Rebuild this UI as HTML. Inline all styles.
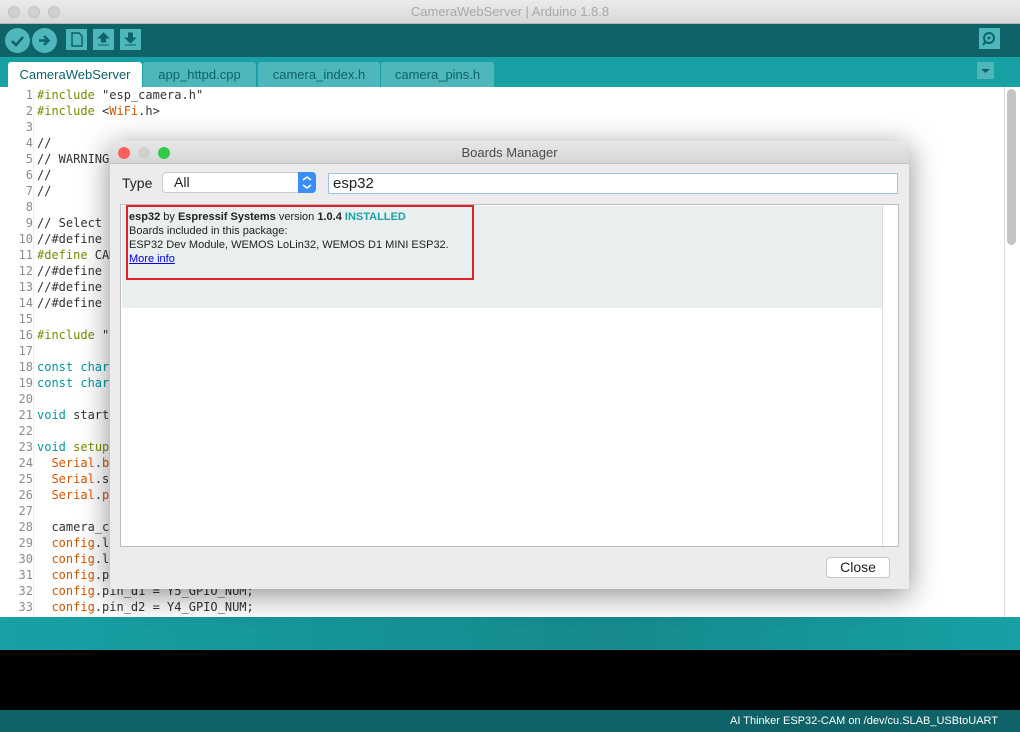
<!DOCTYPE html>
<html><head><meta charset="utf-8"><style>
*{margin:0;padding:0;box-sizing:border-box}
body{width:1020px;height:732px;overflow:hidden;background:#fff;font-family:"Liberation Sans",sans-serif;position:relative}
.abs{position:absolute}
#title{left:0;top:0;width:1020px;height:24px;background:linear-gradient(#ebebeb,#d8d8d8);border-bottom:1px solid #b9b9b9;text-align:center;font-size:13px;color:#a8a8a8;line-height:24px}
.dot{width:12px;height:12px;border-radius:50%;background:#d0d0d0;border:1px solid #c2c2c2;top:6px}
#tb{left:0;top:24px;width:1020px;height:33px;background:#0f6267}
.rb{width:25px;height:25px;border-radius:50%;background:#4db7bb;top:28px}
.sb{width:21px;height:21px;background:#4db7bb;top:29px}
#tabs{left:0;top:57px;width:1020px;height:30px;background:#17a1a5}
.tab{top:62px;height:25px;background:#4db7bb;color:#0f6267;font-size:13px;line-height:25px;text-align:center;border-radius:3px 3px 0 0}
#ed{left:0;top:87px;width:1005px;height:530px;background:#fff;font-family:"DejaVu Sans Mono","Liberation Mono",monospace;font-size:12px}
.ln{position:absolute;left:0;width:33px;text-align:right;color:#8c8c8c;height:16px;line-height:16px}
.cd{position:absolute;left:37px;color:#333;height:16px;line-height:16px;white-space:pre}
.g{color:#728e00}.t{color:#00979c}.o{color:#d35400}
#dlg{left:110px;top:141px;width:799px;height:448px;background:#ececec;box-shadow:0 6px 30px rgba(0,0,0,.45);border-radius:5px 5px 0 0}
</style></head><body>
<div id="title" class="abs">CameraWebServer | Arduino 1.8.8</div>
<div class="abs dot" style="left:8px"></div><div class="abs dot" style="left:28px"></div><div class="abs dot" style="left:48px"></div>
<div id="tb" class="abs"></div>
<div class="abs rb" style="left:5px"><svg width="25" height="25"><path d="M7 13l4 4 7-8" stroke="#0f6267" stroke-width="2.5" fill="none"/></svg></div>
<div class="abs rb" style="left:32px"><svg width="25" height="25"><path d="M7 12.5h9M12 8l4.5 4.5L12 17" stroke="#0f6267" stroke-width="2.5" fill="none"/></svg></div>
<div class="abs sb" style="left:66px"><svg width="21" height="21"><path d="M6 4h7l3 3v10H6z" fill="none" stroke="#0f6267" stroke-width="1.5"/></svg></div>
<div class="abs sb" style="left:93px"><svg width="21" height="21"><path d="M10.5 4l-5 5h3v4h4V9h3z M5 16h11" fill="#0f6267" stroke="#0f6267"/></svg></div>
<div class="abs sb" style="left:120px"><svg width="21" height="21"><path d="M10.5 14l-5-5h3V4h4v5h3z M5 16h11" fill="#0f6267" stroke="#0f6267"/></svg></div>
<div class="abs sb" style="left:979px;top:28px"><svg width="21" height="21"><circle cx="10" cy="10" r="5" fill="none" stroke="#0f6267" stroke-width="2"/><circle cx="10" cy="10" r="1.5" fill="#0f6267"/><path d="M7 13l-3 4" stroke="#0f6267" stroke-width="2"/></svg></div>
<div id="tabs" class="abs"></div>
<div class="abs tab" style="left:8px;width:134px;background:#fff;color:#0f6267">CameraWebServer</div>
<div class="abs tab" style="left:143px;width:113px">app_httpd.cpp</div>
<div class="abs tab" style="left:258px;width:122px">camera_index.h</div>
<div class="abs tab" style="left:381px;width:113px">camera_pins.h</div>
<div class="abs" style="left:977px;top:62px;width:17px;height:17px;background:#4db7bb"><svg width="17" height="17"><path d="M4 7h9l-4.5 4z" fill="#0f6267"/></svg></div>
<div id="ed" class="abs">
<div style="position:absolute;left:33px;top:0;width:1px;height:530px;background:#eee"></div>
<div class="ln" style="top:0">1</div><div class="cd" style="top:0"><span class="g">#include</span> "esp_camera.h"</div>
<div class="ln" style="top:16px">2</div><div class="cd" style="top:16px"><span class="g">#include</span> &lt;<span class="o">WiFi</span>.h&gt;</div>
<div class="ln" style="top:32px">3</div>
<div class="ln" style="top:48px">4</div><div class="cd" style="top:48px">//</div>
<div class="ln" style="top:64px">5</div><div class="cd" style="top:64px">// WARNING!!</div>
<div class="ln" style="top:80px">6</div><div class="cd" style="top:80px">//</div>
<div class="ln" style="top:96px">7</div><div class="cd" style="top:96px">//</div>
<div class="ln" style="top:112px">8</div>
<div class="ln" style="top:128px">9</div><div class="cd" style="top:128px">// Select camera</div>
<div class="ln" style="top:144px">10</div><div class="cd" style="top:144px">//#define CAMERA</div>
<div class="ln" style="top:160px">11</div><div class="cd" style="top:160px"><span class="g">#define</span> CAMERA</div>
<div class="ln" style="top:176px">12</div><div class="cd" style="top:176px">//#define CAMERA</div>
<div class="ln" style="top:192px">13</div><div class="cd" style="top:192px">//#define CAMERA</div>
<div class="ln" style="top:208px">14</div><div class="cd" style="top:208px">//#define CAMERA</div>
<div class="ln" style="top:224px">15</div>
<div class="ln" style="top:240px">16</div><div class="cd" style="top:240px"><span class="g">#include</span> "camera</div>
<div class="ln" style="top:256px">17</div>
<div class="ln" style="top:272px">18</div><div class="cd" style="top:272px"><span class="t">const char</span>* ssid</div>
<div class="ln" style="top:288px">19</div><div class="cd" style="top:288px"><span class="t">const char</span>* pass</div>
<div class="ln" style="top:304px">20</div>
<div class="ln" style="top:320px">21</div><div class="cd" style="top:320px"><span class="t">void</span> startCamera</div>
<div class="ln" style="top:336px">22</div>
<div class="ln" style="top:352px">23</div><div class="cd" style="top:352px"><span class="t">void</span> <span class="g">setup</span>() {</div>
<div class="ln" style="top:368px">24</div><div class="cd" style="top:368px">  <span class="o">Serial</span>.<span class="o">begin</span></div>
<div class="ln" style="top:384px">25</div><div class="cd" style="top:384px">  <span class="o">Serial</span>.setDe</div>
<div class="ln" style="top:400px">26</div><div class="cd" style="top:400px">  <span class="o">Serial</span>.<span class="o">print</span></div>
<div class="ln" style="top:416px">27</div>
<div class="ln" style="top:432px">28</div><div class="cd" style="top:432px">  camera_config</div>
<div class="ln" style="top:448px">29</div><div class="cd" style="top:448px">  <span class="o">config</span>.ledc</div>
<div class="ln" style="top:464px">30</div><div class="cd" style="top:464px">  <span class="o">config</span>.ledc</div>
<div class="ln" style="top:480px">31</div><div class="cd" style="top:480px">  <span class="o">config</span>.pin_</div>
<div class="ln" style="top:496px">32</div><div class="cd" style="top:496px">  <span class="o">config</span>.pin_d1 = Y5_GPIO_NUM;</div>
<div class="ln" style="top:512px">33</div><div class="cd" style="top:512px">  <span class="o">config</span>.pin_d2 = Y4_GPIO_NUM;</div>
</div>
<div class="abs" style="left:1007px;top:89px;width:9px;height:156px;background:#c4c4c4;border-radius:5px"></div>
<div class="abs" style="left:1004px;top:87px;width:1px;height:530px;background:#ddd"></div>
<div class="abs" style="left:0;top:617px;width:1020px;height:33px;background:linear-gradient(90deg,#17a1a5,#168a8e 60%,#17a1a5)"></div>
<div class="abs" style="left:0;top:650px;width:1020px;height:60px;background:#000"></div>
<div class="abs" style="left:0;top:710px;width:1020px;height:22px;background:#0f6267;color:#fff;font-size:11px;line-height:22px;text-align:right;padding-right:22px">AI Thinker ESP32-CAM on /dev/cu.SLAB_USBtoUART</div>

<div id="dlg" class="abs">
<div class="abs" style="left:0;top:0;width:799px;height:23px;background:linear-gradient(#e8e8e8,#d6d6d6);border-bottom:1px solid #c0c0c0;border-radius:5px 5px 0 0;text-align:center;font-size:13px;line-height:23px;color:#4a4a4a">Boards Manager</div>
<div class="abs" style="left:8px;top:6px;width:12px;height:12px;border-radius:50%;background:#fc605c"></div>
<div class="abs" style="left:28px;top:6px;width:12px;height:12px;border-radius:50%;background:#d0d0d0"></div>
<div class="abs" style="left:48px;top:6px;width:12px;height:12px;border-radius:50%;background:#34c84a"></div>
<div class="abs" style="left:12px;top:34px;font-size:14px;color:#222">Type</div>
<div class="abs" style="left:52px;top:31px;width:154px;height:21px;background:#fff;border:1px solid #ccc;border-radius:4px;font-size:14px;line-height:19px;padding-left:11px;color:#222">All</div>
<div class="abs" style="left:188px;top:31px;width:18px;height:21px;background:#3b8ef5;border-radius:0 4px 4px 0"><svg width="18" height="21"><path d="M5 8l4-3 4 3M5 13l4 3 4-3" stroke="#fff" stroke-width="1.5" fill="none"/></svg></div>
<div class="abs" style="left:218px;top:32px;width:570px;height:21px;background:#fff;border:1px solid #9cc3ea;font-size:15px;line-height:19px;padding-left:4px;color:#222">esp32</div>
<div class="abs" style="left:10px;top:63px;width:779px;height:343px;background:#fff;border:1px solid #bdbdbd"></div>
<div class="abs" style="left:12px;top:65px;width:760px;height:102px;background:#e9eeee"></div>
<div class="abs" style="left:772px;top:65px;width:1px;height:340px;background:#ddd"></div>
<div class="abs" style="left:16px;top:64px;width:348px;height:75px;border:2px solid #e2202a"></div>
<div class="abs" style="left:19px;top:69px;font-size:11px;line-height:14px;color:#222"><b>esp32</b> by <b>Espressif Systems</b> version <b>1.0.4</b> <b style="color:#1aa3a7">INSTALLED</b><br>Boards included in this package:<br>ESP32 Dev Module, WEMOS LoLin32, WEMOS D1 MINI ESP32.<br><span style="color:#00e;text-decoration:underline">More info</span></div>
<div class="abs" style="left:716px;top:416px;width:64px;height:21px;background:#fff;border:1px solid #c8c8c8;border-radius:4px;font-size:14px;line-height:19px;text-align:center;color:#222">Close</div>
</div>
</body></html>
